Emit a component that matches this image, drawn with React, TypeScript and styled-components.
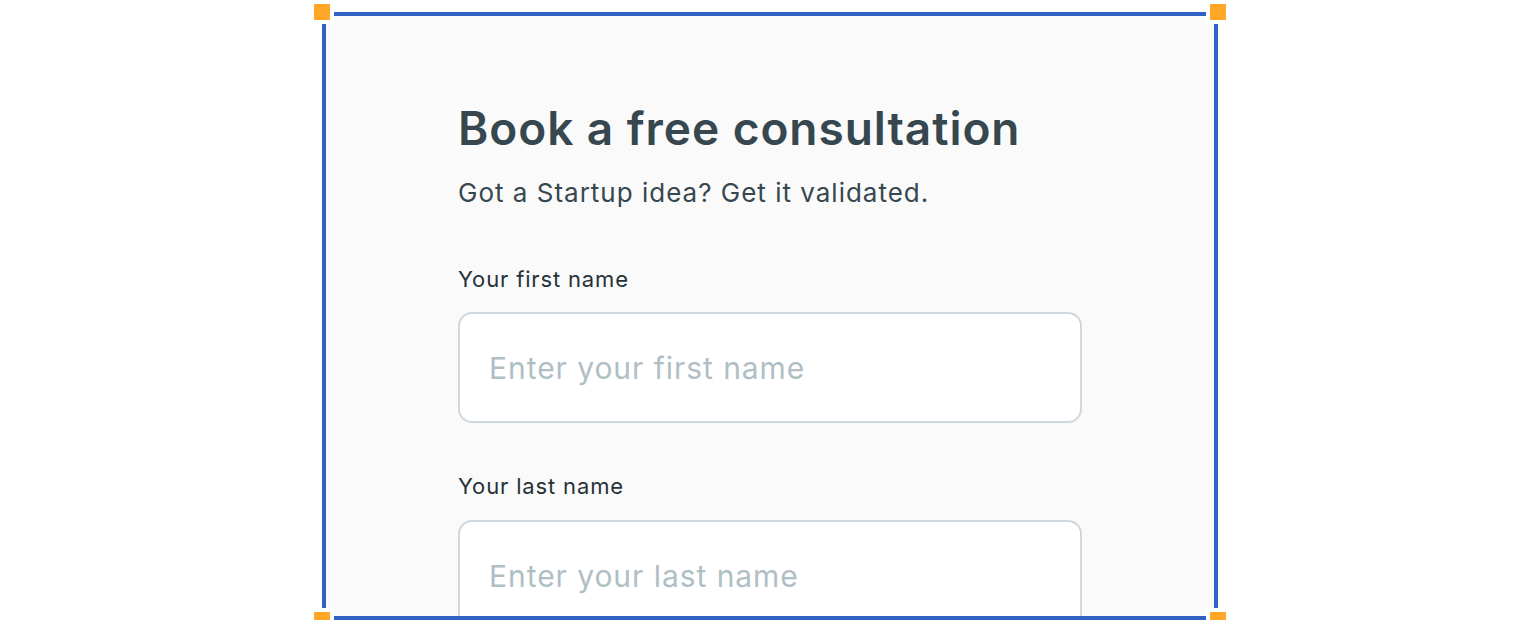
import React from "react";
import styled, { createGlobalStyle } from "styled-components";

const GlobalStyle = createGlobalStyle`
  html, body {
    margin: 0;
    padding: 0;
    background: #ffffff;
  }
  body {
    font-family: Inter, "Noto Sans", "Liberation Sans", sans-serif;
    -webkit-font-smoothing: antialiased;
  }
  * {
    box-sizing: border-box;
  }
`;

const Page = styled.div`
  display: flex;
  justify-content: center;
  padding-top: 12px;
`;

// selected frame in the editor canvas
const Frame = styled.div`
  position: relative;
  width: 896px;
  height: 608px;
  border: 4px solid #3062c6;
`;

const Handle = styled.span<{ $v: "top" | "bottom"; $h: "left" | "right" }>`
  position: absolute;
  ${(p) => p.$v}: -16px;
  ${(p) => p.$h}: -16px;
  width: 24px;
  height: 24px;
  background: #ffa726;
  border: 4px solid #ffffff;
  z-index: 2;
`;

const Viewport = styled.div`
  height: 100%;
  overflow: hidden;
  background: #fafafa;
  padding: 85px 132px 0;
`;

const Form = styled.form`
  display: flex;
  flex-direction: column;
  width: 624px;
`;

const Title = styled.h1`
  margin: 0;
  font-size: 46px;
  line-height: 1.2;
  font-weight: 600;
  letter-spacing: 0.95px;
  color: #37474f;
`;

const Subtitle = styled.p`
  margin: 19px 0 0;
  font-size: 26px;
  line-height: 1.4;
  font-weight: 400;
  letter-spacing: 1px;
  color: #37474f;
`;

const Field = styled.div`
  display: flex;
  flex-direction: column;
  margin-top: 52px;

  & + & {
    margin-top: 48px;
  }
`;

const Label = styled.label`
  font-size: 22px;
  line-height: 1.4;
  font-weight: 400;
  letter-spacing: 0.85px;
  color: #263238;
  margin-bottom: 18px;
`;

const Input = styled.input`
  width: 100%;
  height: 111px;
  padding: 0 29px;
  border: 2px solid #cfd8dc;
  border-radius: 14px;
  background: #ffffff;
  font-family: inherit;
  font-size: 30px;
  letter-spacing: 0.95px;
  color: #263238;
  outline: none;

  &::placeholder {
    color: #b0bec5;
  }
`;

const fields = [
  { id: "first", label: "Your first name", placeholder: "Enter your first name" },
  { id: "last", label: "Your last name", placeholder: "Enter your last name" },
];

export default function App() {
  return (
    <>
      <GlobalStyle />
      <Page>
        <Frame>
          <Handle $v="top" $h="left" />
          <Handle $v="top" $h="right" />
          <Handle $v="bottom" $h="left" />
          <Handle $v="bottom" $h="right" />
          <Viewport>
            <Form onSubmit={(e) => e.preventDefault()}>
              <Title>Book a free consultation</Title>
              <Subtitle>Got a Startup idea? Get it validated.</Subtitle>
              {fields.map((f) => (
                <Field key={f.id}>
                  <Label htmlFor={f.id}>{f.label}</Label>
                  <Input id={f.id} type="text" placeholder={f.placeholder} />
                </Field>
              ))}
            </Form>
          </Viewport>
        </Frame>
      </Page>
    </>
  );
}
